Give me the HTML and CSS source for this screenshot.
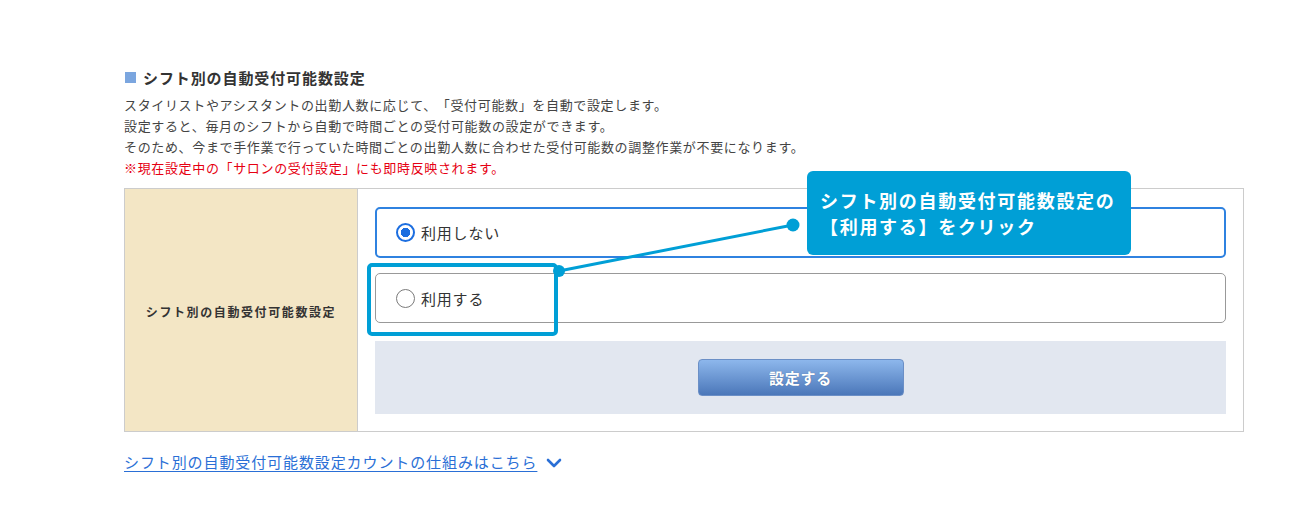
FILE: index.html
```html
<!DOCTYPE html>
<html lang="ja">
	<head>
		<meta charset="utf-8">
		<title>シフト別の自動受付可能数設定</title>
		<link rel="stylesheet" href="styles.css">
	</head>
	<body>
		<div class="page">
			<div class="section">
				<h2 class="sectionTitle"><span class="titleMark"></span>シフト別の自動受付可能数設定</h2>
				<p class="description">
					スタイリストやアシスタントの出勤人数に応じて、「受付可能数」を自動で設定します。<br>
					設定すると、毎月のシフトから自動で時間ごとの受付可能数の設定ができます。<br>
					そのため、今まで手作業で行っていた時間ごとの出勤人数に合わせた受付可能数の調整作業が不要になります。<br>
					<span class="notice">※現在設定中の「サロンの受付設定」にも即時反映されます。</span>
				</p>

				<div class="settingTable">
					<div class="labelCell">シフト別の自動受付可能数設定</div>
					<div class="valueCell">
						<label class="option selected">
							<input type="radio" name="autoCapacity" value="0" checked>
							<span>利用しない</span>
						</label>
						<label class="option">
							<input type="radio" name="autoCapacity" value="1">
							<span>利用する</span>
						</label>
						<div class="submitArea">
							<button class="submitButton">設定する</button>
						</div>
					</div>
				</div>

				<a class="moreLink" href="#"><span class="moreText">シフト別の自動受付可能数設定カウントの仕組みはこちら</span>
					<svg class="chevron" width="16" height="12" viewBox="0 0 16 12"><path d="M2 3 L8 9 L14 3" fill="none" stroke="#2a6fd6" stroke-width="2.6" stroke-linecap="round" stroke-linejoin="round"/></svg>
				</a>
			</div>

			<!-- annotation overlay -->
			<div class="highlightBox"></div>
			<svg class="connector" width="1291" height="522" viewBox="0 0 1291 522">
				<line x1="559" y1="271" x2="793" y2="225" stroke="#009fd6" stroke-width="3"/>
				<circle cx="559" cy="271" r="6" fill="#009fd6"/>
				<circle cx="793" cy="225" r="6.5" fill="#009fd6"/>
			</svg>
			<div class="callout">シフト別の自動受付可能数設定の<br>【利用する】をクリック</div>
		</div>
	</body>
</html>
```

FILE: styles.css
```css
body {
	margin:0;
	background-color:#fff;
	font-family: "Noto Sans CJK JP", "Noto Sans", sans-serif;
	color:#333;
	text-spacing-trim:space-all;
}

.page {
	position:relative;
	width:1291px;
	height:522px;
	overflow:hidden;
}

.section {
	padding-top:67px;
	padding-left:124px;
	width:1120px;
}

.sectionTitle {
	margin:0;
	display:flex;
	align-items:center;
	height:20px;
	font-size:15px;
	letter-spacing:0.9px;
	font-weight:bold;
	color:#333;
}

.titleMark {
	width:11px;
	height:11px;
	margin-left:1px;
	margin-right:7px;
	background-color:#7ba6df;
}

.description {
	margin:7px 0 0 0;
	font-size:13px;
	line-height:21px;
	letter-spacing:0.65px;
	color:#444;
}

.notice {
	color:#e60012;
}

.settingTable {
	margin-top:10px;
	display:grid;
	grid-template-columns:233px 1fr;
	border:1px solid #cccccc;
}

.labelCell {
	display:flex;
	align-items:center;
	justify-content:center;
	background-color:#f3e6c5;
	border-right:1px solid #cccccc;
	font-size:12px;
	font-weight:bold;
	letter-spacing:1.6px;
	color:#333;
	padding-top:3px;
}

.valueCell {
	padding:18px 17px 17px 17px;
	display:flex;
	flex-direction:column;
}

.option {
	display:flex;
	align-items:center;
	gap:6px;
	height:50px;
	box-sizing:border-box;
	padding-left:20px;
	border:1px solid #999;
	border-radius:5px;
	font-size:15px;
	letter-spacing:0.8px;
	color:#333;
	cursor:pointer;
}

.option + .option {
	margin-top:15px;
}

.option.selected {
	height:51px;
	padding-left:19px;
	border:2px solid #2f82e0;
}

.option input {
	appearance:none;
	-webkit-appearance:none;
	margin:0;
	width:19px;
	height:19px;
	border:1.5px solid #7a7a7a;
	border-radius:50%;
	box-sizing:border-box;
	background-color:#fff;
}

.option input:checked {
	border:2px solid #1c6ee0;
	background:radial-gradient(circle, #1c6ee0 0 4.5px, #fff 5px);
}

.submitArea {
	margin-top:18px;
	height:73px;
	background-color:#e2e7f0;
	display:flex;
	align-items:center;
	justify-content:center;
}

.submitButton {
	width:206px;
	height:37px;
	border:1px solid #6b8fc6;
	border-radius:4px;
	background:linear-gradient(#8db7ec, #4b77b9);
	color:#fff;
	font-family:inherit;
	font-size:15px;
	font-weight:bold;
	letter-spacing:0.8px;
	text-shadow:0 0 1px rgba(0,0,0,0.3);
	cursor:pointer;
}

.moreLink {
	display:inline-flex;
	align-items:center;
	gap:9px;
	margin-top:19px;
	color:#2a6fd6;
	text-decoration:none;
	font-size:15px;
	letter-spacing:0.9px;
}

.moreText {
	text-decoration:underline;
	text-underline-offset:3px;
}

.chevron {
	margin-top:2px;
}

/* annotation */

.highlightBox {
	position:absolute;
	left:367px;
	top:263px;
	width:183px;
	height:65px;
	border:4px solid #009fd6;
	border-radius:5px;
}

.connector {
	position:absolute;
	left:0;
	top:0;
	pointer-events:none;
}

.callout {
	position:absolute;
	left:807px;
	top:171px;
	width:324px;
	height:84px;
	box-sizing:border-box;
	padding:16px 0 0 13px;
	background-color:#009fd6;
	border-radius:6px;
	color:#fff;
	font-size:18px;
	font-weight:bold;
	line-height:26px;
	letter-spacing:1.7px;
}
```
